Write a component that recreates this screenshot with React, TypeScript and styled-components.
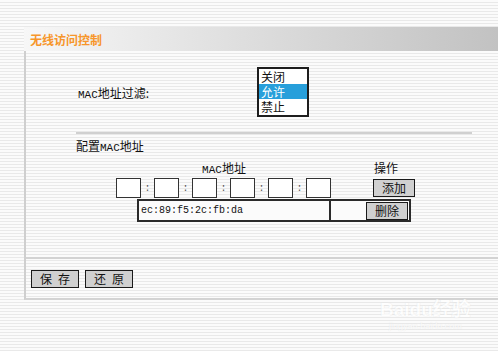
import styled, { createGlobalStyle } from "styled-components";

const GlobalStyle = createGlobalStyle`
  html, body {
    margin: 0;
    padding: 0;
  }
  body {
    font-family: "Liberation Mono", "Noto Sans CJK SC", monospace;
    font-size: 12px;
    color: #111;
  }
`;

const stripes = `repeating-linear-gradient(
  to bottom,
  #fbfbfb 0px,
  #fbfbfb 2px,
  #e9e9e9 2px,
  #e9e9e9 3px
)`;

const Page = styled.div`
  position: relative;
  width: 498px;
  height: 351px;
  box-sizing: border-box;
  padding: 27px 0 0 24px;
  background: ${stripes};
  overflow: hidden;
`;

const Panel = styled.div`
  display: flex;
  flex-direction: column;
  width: 474px;
`;

const TitleBar = styled.div`
  height: 24px;
  display: flex;
  align-items: center;
  padding-left: 6px;
  background: linear-gradient(to right, #f7f7f7 0%, #dcdcdc 50%, #c2c2c2 100%);
  color: #f7962a;
  font-family: "Noto Sans CJK SC", sans-serif;
  font-weight: 700;
  font-size: 12px;
`;

const Body = styled.div`
  border-left: 2px solid #cfcfcf;
  border-bottom: 2px solid #d3d3d3;
  height: 247px;
  display: flex;
  flex-direction: column;
`;

const FilterRow = styled.div`
  display: flex;
  align-items: center;
  margin-top: 16px;
  padding-left: 52px;
`;

const FilterLabel = styled.span`
  width: 179px;
  font-size: 11px;
`;

const ListBox = styled.div`
  width: 48px;
  height: 46px;
  border: 2px solid #1e1e1e;
  background: #fff;
  display: flex;
  flex-direction: column;
`;

const ListOption = styled.div<{ $selected?: boolean }>`
  height: 15px;
  line-height: 15px;
  overflow: hidden;
  padding-left: 2px;
  font-family: "Noto Sans CJK SC", sans-serif;
  font-size: 12px;
  background: ${(p) => (p.$selected ? "#279fdb" : "transparent")};
  color: ${(p) => (p.$selected ? "#fff" : "#111")};
`;

const Divider = styled.div`
  margin: 15px 0 0 50px;
  width: 396px;
  height: 2px;
  background: #d0d0d0;
`;

const SectionTitle = styled.div`
  margin: 4px 0 0 50px;
  height: 16px;
  line-height: 16px;
  font-size: 11px;
`;

const Cjk = styled.span`
  font-family: "Noto Sans CJK SC", sans-serif;
  font-size: 12px;
`;

const HeadRow = styled.div`
  display: flex;
  align-items: center;
  margin-top: 5px;
  height: 16px;
`;

const HeadCell = styled.div<{ $width: number; $left?: number }>`
  width: ${(p) => p.$width}px;
  margin-left: ${(p) => p.$left ?? 0}px;
  text-align: center;
  font-size: 11px;
`;

const InputRow = styled.div`
  display: flex;
  align-items: center;
  margin: 3px 0 0 90px;
  height: 20px;
`;

const OctetBox = styled.div`
  width: 23px;
  height: 18px;
  border: 1px solid #333;
  background: #fff;
`;

const Colon = styled.span`
  width: 13px;
  text-align: center;
  font-size: 10px;
  color: #555;
`;

const GrayButton = styled.button<{ $width: number }>`
  width: ${(p) => p.$width}px;
  height: 18px;
  padding: 0;
  border: 1px solid #1a1a1a;
  background: #d0d0d0;
  font-family: "Noto Sans CJK SC", sans-serif;
  font-size: 12px;
  line-height: 16px;
  color: #111;
  letter-spacing: ${(p) => (p.$width > 45 ? "6px" : "0")};
  text-indent: ${(p) => (p.$width > 45 ? "6px" : "0")};
`;

const AddSlot = styled.div`
  margin-left: 42px;
  display: flex;
`;

const EntryTable = styled.div`
  display: flex;
  margin: 1px 0 0 111px;
  width: 270px;
  height: 19px;
  border: 2px solid #2b2b2b;
  background: #fbfbfb;
`;

const MacCell = styled.div`
  width: 188px;
  border-right: 2px solid #2b2b2b;
  padding-left: 2px;
  line-height: 19px;
  font-size: 10px;
`;

const ActionCell = styled.div`
  flex: 1;
  display: flex;
  align-items: center;
  justify-content: flex-end;
  padding-right: 1px;
`;

const Footer = styled.div`
  margin-top: auto;
  border-top: 2px solid #d3d3d3;
  height: 39px;
  display: flex;
  align-items: center;
  gap: 6px;
  padding-left: 5px;
`;

const Watermark = styled.div`
  position: absolute;
  left: 380px;
  top: 300px;
  display: flex;
  flex-direction: column;
  align-items: center;
  color: #fff;
  opacity: 0.75;
  text-shadow: 0 0 1px #d8d8d8;
  line-height: 1;
`;

const WatermarkBrand = styled.span`
  font-family: "Liberation Sans", "Noto Sans CJK SC", sans-serif;
  font-size: 19px;
  font-weight: 700;
`;

const WatermarkSite = styled.span`
  font-family: "Liberation Sans", sans-serif;
  font-size: 9px;
  margin-top: 3px;
`;

const octets = [0, 1, 2, 3, 4, 5];

export default function App() {
  return (
    <>
      <GlobalStyle />
      <Page>
        <Panel>
          <TitleBar>无线访问控制</TitleBar>
          <Body>
            <FilterRow>
              <FilterLabel>
                MAC<Cjk>地址过滤:</Cjk>
              </FilterLabel>
              <ListBox>
                <ListOption>关闭</ListOption>
                <ListOption $selected>允许</ListOption>
                <ListOption>禁止</ListOption>
              </ListBox>
            </FilterRow>
            <Divider />
            <SectionTitle>
              <Cjk>配置</Cjk>MAC<Cjk>地址</Cjk>
            </SectionTitle>
            <HeadRow>
              <HeadCell $width={220} $left={88}>
                MAC<Cjk>地址</Cjk>
              </HeadCell>
              <HeadCell $width={24} $left={40}>
                <Cjk>操作</Cjk>
              </HeadCell>
            </HeadRow>
            <InputRow>
              {octets.map((i) => (
                <span key={i} style={{ display: "contents" }}>
                  {i > 0 && <Colon>:</Colon>}
                  <OctetBox />
                </span>
              ))}
              <AddSlot>
                <GrayButton $width={42}>添加</GrayButton>
              </AddSlot>
            </InputRow>
            <EntryTable>
              <MacCell>ec:89:f5:2c:fb:da</MacCell>
              <ActionCell>
                <GrayButton $width={42}>删除</GrayButton>
              </ActionCell>
            </EntryTable>
            <Footer>
              <GrayButton $width={48}>保存</GrayButton>
              <GrayButton $width={48}>还原</GrayButton>
            </Footer>
          </Body>
        </Panel>
        <Watermark>
          <WatermarkBrand>Baidu经验</WatermarkBrand>
          <WatermarkSite>jingyan.baidu.com</WatermarkSite>
        </Watermark>
      </Page>
    </>
  );
}
